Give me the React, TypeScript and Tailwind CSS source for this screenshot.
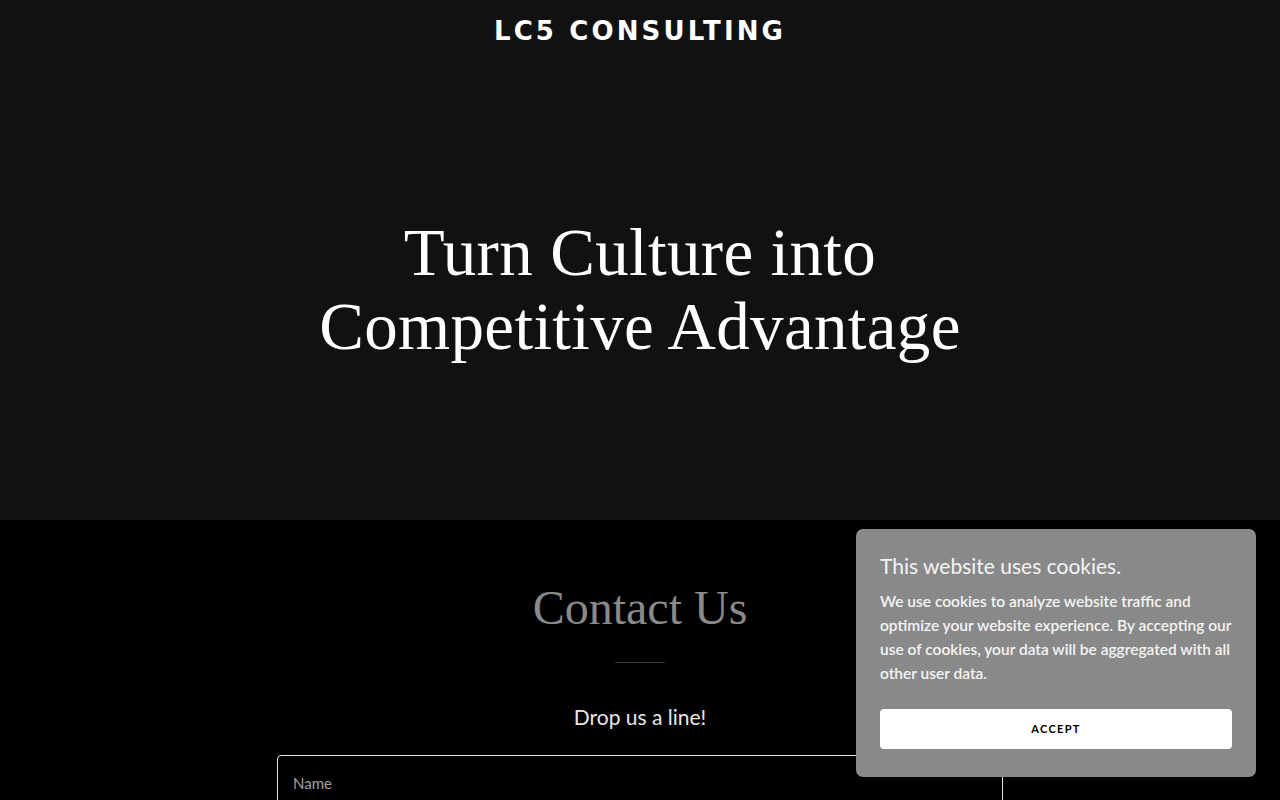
import React from 'react';

export default function App() {
  return (
    <div className="relative w-full h-[800px] overflow-hidden bg-black font-['Lato','Noto_Sans',sans-serif]">
      {/* Hero */}
      <section className="bg-[#111111] h-[520px] flex flex-col items-center">
        <h1 className="mt-[15px] text-[26px] leading-[32px] font-bold tracking-[0.12em] text-white font-['DejaVu_Sans',sans-serif]">
          LC5 CONSULTING
        </h1>
        <h2 className="mt-[168px] text-center text-white text-[67px] leading-[74px] font-['Liberation_Serif',serif] tracking-[0.005em]">
          Turn Culture into
          <br />
          Competitive Advantage
        </h2>
      </section>

      {/* Contact */}
      <section className="flex flex-col items-center">
        <h3 className="mt-[59px] text-[48px] leading-[58px] text-[#8a8a8a] font-['Liberation_Serif',serif]">
          Contact Us
        </h3>
        <div className="mt-[25px] w-[50px] h-px bg-[#3a3a3a]" />
        <p className="mt-[41px] text-[21px] leading-[26px] text-[#e6e6e6]">Drop us a line!</p>
        <div className="mt-[25px] w-[726px] h-[70px] border border-[#e5e5e5] rounded-[4px] px-[15px] pt-[15px]">
          <span className="text-[15px] text-[#a0a0a0]">Name</span>
        </div>
      </section>

      {/* Cookie banner */}
      <div className="absolute left-[856px] top-[529px] w-[400px] h-[248px] bg-[#898989] rounded-[7px] px-[24px] pt-[23px]">
        <p className="text-[21px] leading-[28px] text-[#f4f4f4]">This website uses cookies.</p>
        <p className="mt-[9px] text-[15.5px] leading-[24px] font-semibold text-[#f4f4f4]">
          We use cookies to analyze website traffic and optimize your website experience. By accepting our use of cookies, your data will be aggregated with all other user data.
        </p>
        <button className="mt-[24px] w-full h-[40px] bg-white rounded-[4px] text-[11px] font-bold tracking-[0.12em] text-black">
          ACCEPT
        </button>
      </div>
    </div>
  );
}
